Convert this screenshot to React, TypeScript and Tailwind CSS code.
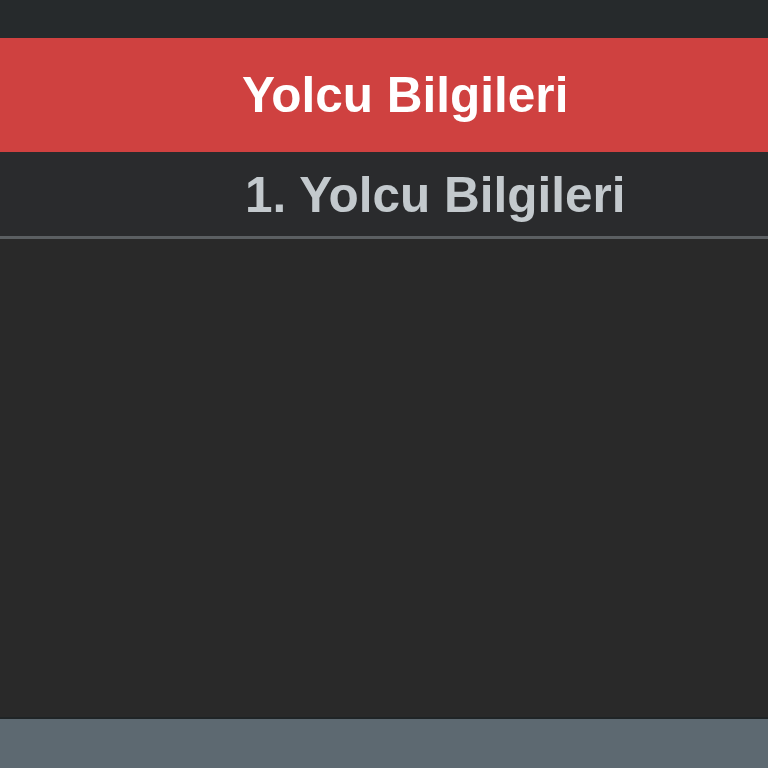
export default function App() {
  return (
    <div className="w-[768px] h-[768px] flex flex-col bg-[#292929] font-['Liberation_Sans',Arial,sans-serif] font-bold overflow-hidden">
      {/* top bar */}
      <div className="h-[38px] shrink-0 bg-[#262a2c]" />

      {/* header */}
      <div className="h-[114px] shrink-0 bg-[#cf4140] flex items-center pl-[242px]">
        <h1 className="text-[49.5px] leading-none text-white">Yolcu Bilgileri</h1>
      </div>

      {/* passenger row */}
      <div className="h-[87px] shrink-0 bg-[#2a2b2d] flex items-center pl-[245px] pt-[1px] border-b-[3px] border-[#5b5f62]">
        <span className="text-[49.5px] leading-none text-[#c3c9cd]">1. Yolcu Bilgileri</span>
      </div>

      <div className="flex-1" />

      {/* footer */}
      <div className="h-[51px] shrink-0 bg-[#5d6971] border-t-[2px] border-[#1f2426]" />
    </div>
  );
}
